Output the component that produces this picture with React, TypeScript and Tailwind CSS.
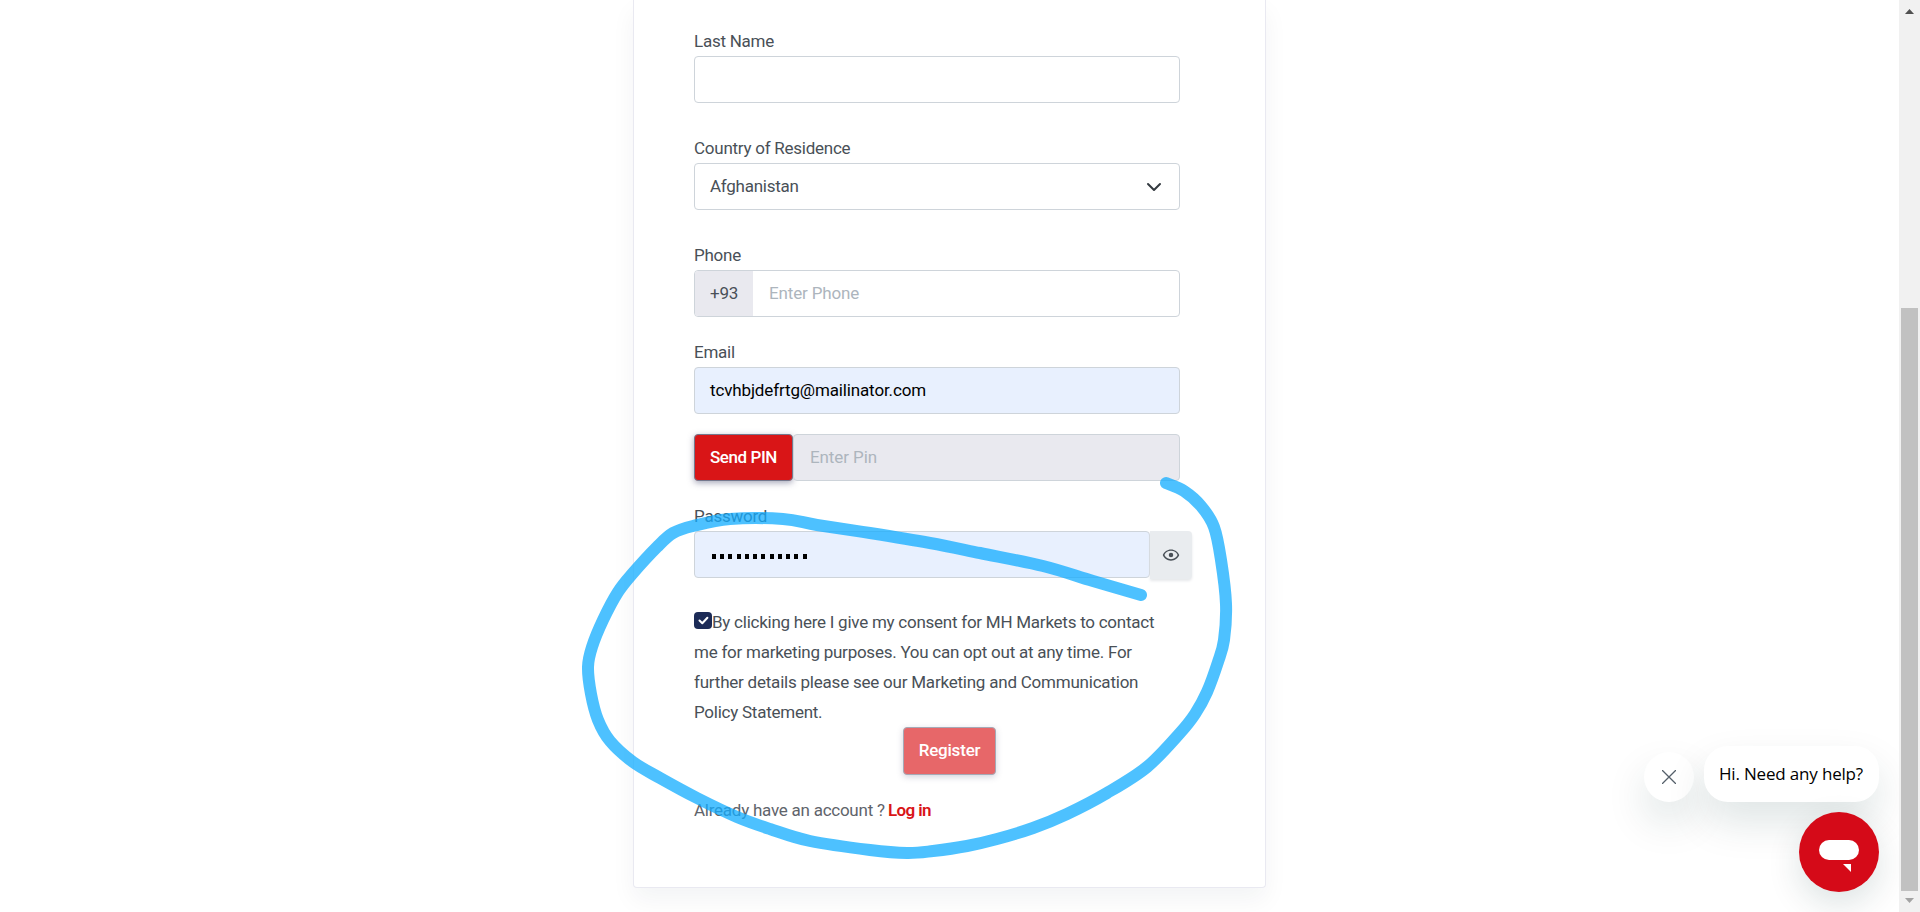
import type { ReactNode } from "react";

type Point = [number, number];

const strokePoints: Point[] = [
  [1166, 483], [1184, 491], [1201, 506], [1214, 527], [1221, 560], [1226, 604], [1224, 640], [1218, 662],
  [1207, 692], [1195, 714], [1180, 733], [1147, 767], [1107, 793], [1067, 814], [1033, 828], [997, 839],
  [967, 846], [933, 851], [907, 853], [870, 850], [810, 841], [770, 829], [737, 817], [697, 798],
  [660, 778], [633, 762], [610, 741], [598, 720], [591, 694], [588, 667], [592, 647], [603, 620],
  [618, 592], [633, 573], [657, 547], [673, 533], [693, 526], [730, 519], [783, 519], [817, 525],
  [870, 533], [930, 543], [980, 553], [1043, 566], [1093, 581], [1141, 595],
];

function smoothPath(points: Point[]): string {
  let d = `M${points[0][0]} ${points[0][1]}`;
  for (let i = 0; i < points.length - 1; i++) {
    const a = points[Math.max(i - 1, 0)];
    const b = points[i];
    const c = points[i + 1];
    const e = points[Math.min(i + 2, points.length - 1)];
    d += `C${b[0] + (c[0] - a[0]) / 6} ${b[1] + (c[1] - a[1]) / 6} ${c[0] - (e[0] - b[0]) / 6} ${c[1] - (e[1] - b[1]) / 6} ${c[0]} ${c[1]}`;
  }
  return d;
}

function Label({ children }: { children: ReactNode }) {
  return <div className="h-[30px] leading-[30px]">{children}</div>;
}

function EyeIcon() {
  return (
    <svg className="size-[18px]" viewBox="0 0 24 24" fill="#495057">
      <path d="M12 9a3 3 0 0 1 3 3 3 3 0 0 1-3 3 3 3 0 0 1-3-3 3 3 0 0 1 3-3m0-4.5c5 0 9.27 3.11 11 7.5-1.73 4.39-6 7.5-11 7.5S2.73 16.39 1 12c1.73-4.39 6-7.5 11-7.5M3.18 12a9.821 9.821 0 0 0 17.64 0 9.821 9.821 0 0 0-17.64 0" />
    </svg>
  );
}

function RegistrationCard() {
  return (
    <section className="h-[888px] w-[633px] shrink-0 rounded-b border border-t-0 border-[#e9e9f1] bg-white pt-[26px] pl-[60px] shadow-[0_12px_24px_rgba(18,38,63,0.05)]">
      <div className="w-[486px]">
        <Label>Last Name</Label>
        <div className="h-[47px] rounded border border-[#ced4da]" />
      </div>

      <div className="mt-[30px] w-[486px]">
        <Label>Country of Residence</Label>
        <div className="flex h-[47px] items-center justify-between rounded border border-[#ced4da] pr-[17px] pl-[15px]">
          <span>Afghanistan</span>
          <svg className="size-4" viewBox="0 0 16 16" fill="none" stroke="#343a40" strokeWidth="2" strokeLinecap="round" strokeLinejoin="round">
            <path d="m2 5 6 6 6-6" />
          </svg>
        </div>
      </div>

      <div className="mt-[30px] w-[486px]">
        <Label>Phone</Label>
        <div className="flex h-[47px] overflow-hidden rounded border border-[#ced4da]">
          <span className="flex w-[58px] items-center bg-[#e9e9ef] pl-[15px]">+93</span>
          <span className="flex items-center pl-4 tracking-[-0.16px] text-[#adb5bd]">Enter Phone</span>
        </div>
      </div>

      <div className="mt-5 w-[486px]">
        <Label>Email</Label>
        <div className="flex h-[47px] items-center rounded border border-[#ced4da] bg-[#e8f0fe] pl-[15px] tracking-[-0.14px] text-black">
          tcvhbjdefrtg@mailinator.com
        </div>
      </div>

      <div className="mt-5 flex h-[47px] w-[486px]">
        <button className="w-[99px] rounded border border-[#74788d] bg-[#d91517] font-medium tracking-[-0.42px] text-white shadow-[0_2px_6px_rgba(80,84,120,0.5)]">
          Send PIN
        </button>
        <div className="flex flex-1 items-center rounded border border-[#ced4da] bg-[#e9e9ef] pl-4 tracking-[-0.1px] text-[#adb5bd]">
          Enter Pin
        </div>
      </div>

      <div className="mt-5">
        <Label>Password</Label>
        <div className="flex h-12">
          <div className="flex h-[47px] w-[456px] items-center gap-[4.24px] rounded border border-[#ced4da] bg-[#e8f0fe] pt-[3px] pl-[17px]">
            {Array.from({ length: 12 }, (_, i) => (
              <span key={i} className="h-[5px] w-1 bg-black" />
            ))}
          </div>
          <div className="flex h-12 w-[42px] items-center justify-center rounded-r bg-[#e9ecef] shadow-[0_2px_3px_#e6e8eb]">
            <EyeIcon />
          </div>
        </div>
      </div>

      <div className="mt-7 whitespace-nowrap leading-[30px]">
        <div className="flex h-[30px]">
          <span className="mt-[5px] flex h-[17px] w-[18px] items-center justify-center rounded bg-[#1c2b57]">
            <svg className="h-[9px] w-[11px]" viewBox="0 0 11 9" fill="none" stroke="white" strokeWidth="2" strokeLinecap="round" strokeLinejoin="round">
              <path d="m1.5 4.5 2.8 2.8L9.4 1.8" />
            </svg>
          </span>
          <span className="tracking-[-0.25px]">By clicking here I give my consent for MH Markets to contact</span>
        </div>
        <div>me for marketing purposes. You can opt out at any time. For</div>
        <div className="tracking-[-0.22px]">further details please see our Marketing and Communication</div>
        <div>Policy Statement.</div>
      </div>

      <div className="flex w-[511px] justify-center">
        <button className="h-12 w-[93px] rounded border border-[#a6a9b6] bg-[#e76769] font-medium tracking-[-0.2px] text-white shadow-[0_2px_6px_rgba(80,84,120,0.25)]">
          Register
        </button>
      </div>

      <div className="mt-[20px] flex leading-[30px]">
        <span className="w-[194px] text-[#5f646b]">Already have an account ?</span>
        <a className="font-semibold tracking-[-0.6px] text-[#d91517]">Log in</a>
      </div>
    </section>
  );
}

function ChatWidget() {
  return (
    <div className="absolute right-[41px] bottom-5 flex flex-col items-end gap-2.5 font-['Open_Sans',sans-serif]">
      <div className="flex items-end gap-2.5">
        <button className="flex size-[50px] items-center justify-center rounded-full bg-white shadow-[0_20px_40px_rgba(0,51,51,0.13)]">
          <svg className="size-[14px]" viewBox="0 0 14 14" stroke="#55606a" strokeWidth="1.3">
            <path d="M0 0 14 14M14 0 0 14" />
          </svg>
        </button>
        <div className="flex h-14 w-[175px] items-center rounded-[24px] bg-white pl-[15px] text-[17px] tracking-[-0.18px] whitespace-nowrap text-black shadow-[0_20px_40px_rgba(0,51,51,0.13)]">
          Hi. Need any help?
        </div>
      </div>
      <button className="flex size-20 justify-center rounded-full bg-[#d50a18] pt-7 shadow-[0_12px_34px_rgba(0,51,51,0.14)]">
        <svg className="h-8 w-10" viewBox="0 0 40 32" fill="white">
          <rect width="40" height="20" rx="10" />
          <path d="M24 24h8v8z" />
        </svg>
      </button>
    </div>
  );
}

function Scrollbar() {
  return (
    <div className="relative z-20 flex w-[21px] shrink-0 flex-col items-center justify-between bg-[#f1f1f1] pt-[9px] pb-[9px]">
      <svg className="h-[5px] w-[9px]" viewBox="0 0 9 5" fill="#505050">
        <path d="M4.5 0 9 5H0z" />
      </svg>
      <div className="flex flex-col items-center gap-[7px]">
        <div className="h-[583px] w-[17px] bg-[#c1c1c1]" />
        <svg className="h-[5px] w-[9px]" viewBox="0 0 9 5" fill="#a3a3a3">
          <path d="M0 0h9L4.5 5z" />
        </svg>
      </div>
    </div>
  );
}

export default function App() {
  return (
    <div className="relative flex h-[912px] w-[1920px] overflow-hidden bg-white font-[Roboto,sans-serif] text-[17px] tracking-[-0.25px] text-[#495057]">
      <main className="flex flex-1 items-start justify-center">
        <RegistrationCard />
      </main>
      <ChatWidget />
      <Scrollbar />
      <svg className="pointer-events-none absolute inset-0 z-30" width="1920" height="912" viewBox="0 0 1920 912" fill="none">
        <path d={smoothPath(strokePoints)} stroke="#12acff" strokeOpacity="0.75" strokeWidth="12" strokeLinecap="round" strokeLinejoin="round" />
      </svg>
    </div>
  );
}
